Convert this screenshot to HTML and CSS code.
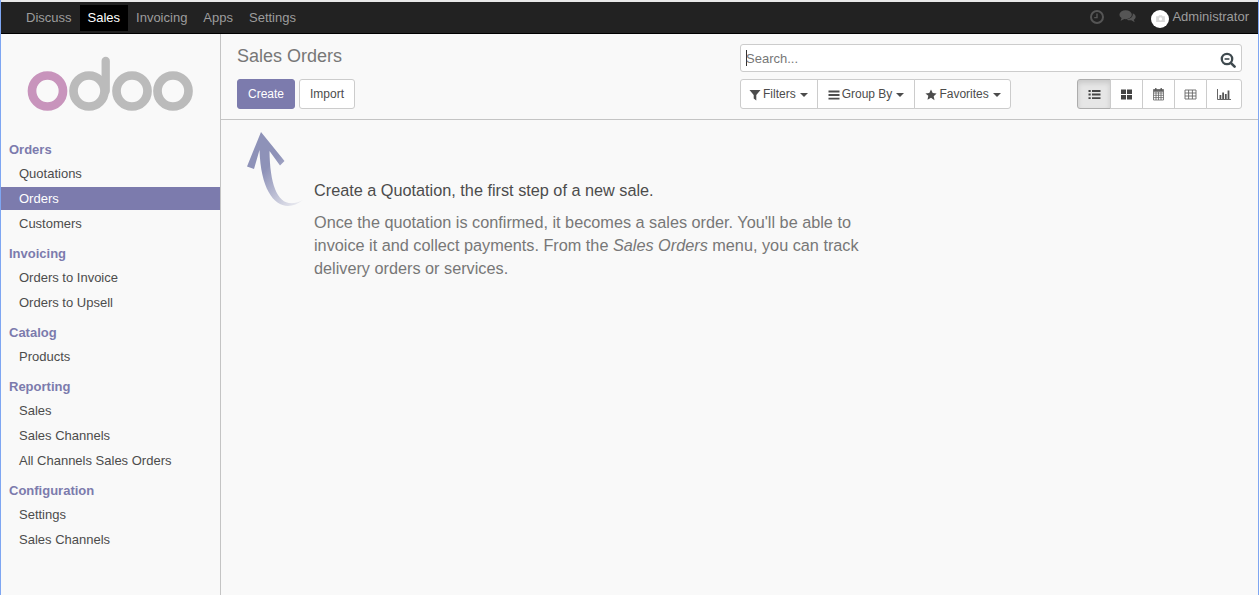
FILE: index.html
```html
<!DOCTYPE html>
<html lang="en">
<head>
<meta charset="utf-8">
<title>Sales Orders</title>
<link rel="stylesheet" href="styles.css">
</head>
<body>
<div class="frame">
  <header class="navbar">
    <nav class="apps">
      <a class="app">Discuss</a>
      <a class="app active">Sales</a>
      <a class="app">Invoicing</a>
      <a class="app">Apps</a>
      <a class="app">Settings</a>
    </nav>
    <div class="systray">
      <svg class="tray-icon clock" viewBox="0 0 16 16"><circle cx="8" cy="8" r="6" fill="none" stroke="currentColor" stroke-width="2"/><path d="M8 4.500V8.600H5.200" fill="none" stroke="currentColor" stroke-width="1.400"/></svg>
      <svg class="tray-icon chat" viewBox="0 0 18 16"><ellipse cx="7" cy="6" rx="6.600" ry="4.800" fill="currentColor"/><path d="M3 9l-1.500 3.500L7 10z" fill="currentColor"/><path d="M14.600 4.400c1.900.8 3.100 2.200 3.100 3.800 0 1.300-.8 2.400-2 3.200l1 2.800-3.600-2.200c-2 .2-4-.2-5.300-1.200 3.800 0 7.400-2.300 6.800-6.400z" fill="currentColor"/></svg>
      <span class="user">
        <span class="avatar"><svg viewBox="0 0 10 8" class="cam"><path d="M0 1.500h2.500L3.300.3h3.400l.8 1.200H10V8H0z" fill="#d9d9d9"/><circle cx="5" cy="4.500" r="1.800" fill="#fff"/></svg></span>
        <span class="user-name">Administrator</span>
      </span>
    </div>
  </header>
  <div class="main">
    <aside class="sidebar">
      <div class="logo">
        <svg viewBox="0 0 168 60" width="168" height="60">
          <circle cx="20.500" cy="34" r="15.500" fill="none" stroke="#c894bc" stroke-width="8.700"/>
          <circle cx="62" cy="34" r="15.500" fill="none" stroke="#bbbbbb" stroke-width="8.700"/>
          <path d="M78.700 34V4" fill="none" stroke="#bbbbbb" stroke-width="8.300" stroke-linecap="round"/>
          <circle cx="105" cy="34" r="15.500" fill="none" stroke="#bbbbbb" stroke-width="8.700"/>
          <circle cx="146" cy="34" r="15.500" fill="none" stroke="#bbbbbb" stroke-width="8.700"/>
        </svg>
      </div>
      <h4 class="menu-head first">Orders</h4>
      <a class="menu-item">Quotations</a>
      <a class="menu-item selected">Orders</a>
      <a class="menu-item">Customers</a>
      <h4 class="menu-head">Invoicing</h4>
      <a class="menu-item">Orders to Invoice</a>
      <a class="menu-item">Orders to Upsell</a>
      <h4 class="menu-head">Catalog</h4>
      <a class="menu-item">Products</a>
      <h4 class="menu-head">Reporting</h4>
      <a class="menu-item">Sales</a>
      <a class="menu-item">Sales Channels</a>
      <a class="menu-item">All Channels Sales Orders</a>
      <h4 class="menu-head">Configuration</h4>
      <a class="menu-item">Settings</a>
      <a class="menu-item">Sales Channels</a>
    </aside>
    <section class="content">
      <div class="control-panel">
        <div class="cp-left">
          <h1 class="title">Sales Orders</h1>
          <div class="actions">
            <button class="btn primary">Create</button>
            <button class="btn">Import</button>
          </div>
        </div>
        <div class="cp-right">
          <div class="search">
            <span class="caret-bar"></span><span class="placeholder">Search...</span>
            <svg class="search-icon" viewBox="0 0 16 16"><circle cx="7" cy="7" r="5.200" fill="none" stroke="#3f4a4f" stroke-width="2.300"/><path d="M4.600 7h4.800" stroke="#3f4a4f" stroke-width="1.600"/><path d="M10.800 10.800l3.800 3.800" stroke="#3f4a4f" stroke-width="2.600" stroke-linecap="round"/></svg>
          </div>
          <div class="tools">
            <div class="group">
              <button class="btn seg seg-filter"><svg class="ico" viewBox="0 0 12 12"><path d="M.5 1h11L7.300 6v5.500L4.700 9.500V6z" fill="#4c4c4c"/></svg>Filters<i class="caret"></i></button>
              <button class="btn seg"><svg class="ico" viewBox="0 0 12 12"><path d="M.5 1.500h11v1.900H.5zM.5 5.100h11v1.900H.5zM.5 8.700h11v1.900H.5z" fill="#4c4c4c"/></svg>Group By<i class="caret"></i></button>
              <button class="btn seg seg-fav"><svg class="ico" viewBox="0 0 12 12"><path d="M6 .5l1.700 3.600 3.900.5-2.900 2.700.8 3.900L6 8.800l-3.500 1.900.8-3.900L.4 4.600l3.900-.5z" fill="#4c4c4c"/></svg>Favorites<i class="caret"></i></button>
            </div>
            <div class="group views">
              <button class="btn view on"><svg class="vico" viewBox="0 0 13 11"><path d="M.5 1h2.200v1.900H.5zM4 1h8.500v1.900H4zM.5 4.600h2.200v1.900H.5zM4 4.600h8.500v1.900H4zM.5 8.200h2.200v1.900H.5zM4 8.200h8.500v1.900H4z" fill="#444"/></svg></button>
              <button class="btn view"><svg class="vico" viewBox="0 0 13 11"><path d="M1 .5h5v4.500H1zM7 .5h5v4.500H7zM1 6h5v4.500H1zM7 6h5v4.500H7z" fill="#444"/></svg></button>
              <button class="btn view"><svg class="vico cal" viewBox="0 0 13 14"><path d="M1.500 2.500h10v10.500h-10z M1.500 6h10M1.500 8.300h10M1.500 10.600h10M4 5v8M6.500 5v8M9 5v8" fill="none" stroke="#666" stroke-width=".8"/><path d="M1.500 2.500h10V4.800h-10z" fill="#666"/><path d="M3.800 1v2.500M9.200 1v2.500" stroke="#555" stroke-width="1.300"/></svg></button>
              <button class="btn view"><svg class="vico" viewBox="0 0 13 11"><path d="M1 1h11v9H1zM1 4h11M1 7h11M4.600 1v9M8.400 1v9" fill="none" stroke="#666" stroke-width=".9"/></svg></button>
              <button class="btn view"><svg class="vico chart" viewBox="0 0 14 11"><path d="M.5 0v10.500H14" fill="none" stroke="#555" stroke-width=".9"/><path d="M2.500 6h1.800v4H2.500zM5.200 3.500H7V10H5.200zM7.900 5h1.800v5H7.900zM10.600 1.500h1.800V10h-1.800z" fill="#555"/></svg></button>
            </div>
          </div>
        </div>
      </div>
      <div class="view-area">
        <svg class="arrow" viewBox="240 125 70 90" width="70" height="90">
          <defs>
            <linearGradient id="fade" gradientUnits="userSpaceOnUse" x1="265" y1="170" x2="303" y2="205">
              <stop offset="0" stop-color="#8e92b8"/>
              <stop offset="1" stop-color="#8e92b8" stop-opacity="0.080"/>
            </linearGradient>
          </defs>
          <path d="M261 132 L284.500 161 L280 165.500 L269.500 151 C270 190 280 212 303 200 C283 216 261 200 259.500 150 L254 169 L247 166.500 Z" fill="url(#fade)"/>
        </svg>
        <div class="help">
          <p class="help-title">Create a Quotation, the first step of a new sale.</p>
          <p class="help-body">Once the quotation is confirmed, it becomes a sales order. You'll be able to invoice it and collect payments. From the <em>Sales Orders</em> menu, you can track delivery orders or services.</p>
        </div>
      </div>
    </section>
  </div>
</div>
</body>
</html>
```
FILE: styles.css
```css
* { box-sizing: border-box; }
html, body { margin: 0; height: 100%; }
body {
  font-family: "Liberation Sans", Arial, sans-serif;
  font-size: 13px;
  line-height: 1.43;
  color: #4c4c4c;
  background: #e9e9e9;
  overflow: hidden;
}
.frame {
  height: 595px;
  padding-top: 2px;
  border-left: 1px solid #7ea6f2;
  border-right: 1px solid #7ea6f2;
  display: flex;
  flex-direction: column;
}
.navbar {
  flex: none;
  height: 32px;
  background: #222;
  border-bottom: 1px solid #000;
  display: flex;
  justify-content: space-between;
}
.apps { display: flex; padding-left: 17px; }
.app {
  padding: 0 8px;
  height: 26px;
  margin-top: 3px;
  line-height: 26px;
  font-size: 13px;
  color: #9d9d9d;
}
.app.active { color: #fff; background: #000; }
.systray { display: flex; align-items: center; padding-right: 9px; color: #9d9d9d; }
.tray-icon { color: #555; display: block; margin-top: -2px; }
.clock { width: 16px; height: 16px; margin-right: 14px; }
.chat { width: 17px; height: 15px; margin-right: 15px; }
.user { display: flex; align-items: center; }
.avatar {
  width: 18px; height: 18px; margin: 2px 3px 0 0;
  border-radius: 50%; background: #fff;
  display: flex; align-items: center; justify-content: center;
}
.cam { width: 9px; height: 7px; }
.user-name { font-size: 13px; }
.main { flex: 1; display: flex; min-height: 0; }
.sidebar {
  flex: none;
  width: 220px;
  background: #f9f9f9;
  border-right: 1px solid #c4c4c4;
}
.logo { height: 106px; padding: 23px 0 0 26px; }
.logo svg { display: block; overflow: visible; }
.menu-head {
  margin: 9px 0 1px;
  padding-left: 8px;
  height: 20px;
  line-height: 20px;
  font-size: 13px;
  font-weight: 700;
  color: #7c7bad;
}
.menu-head.first { margin-top: 0; }
.menu-item {
  display: block;
  height: 23px;
  margin-top: 2px;
  line-height: 23px;
  padding-left: 18px;
  font-size: 13px;
  color: #4c4c4c;
}
.menu-item.selected { background: #7c7bad; color: #fff; }
.content { flex: 1; min-width: 0; background: #f9f9f9; display: flex; flex-direction: column; }
.control-panel {
  flex: none;
  height: 86px;
  border-bottom: 1px solid #c4c4c4;
  display: flex;
  justify-content: space-between;
  padding: 10px 16px 0 16px;
}
.title { margin: 0; font-size: 18px; font-weight: 400; color: #777; line-height: 24px; }
.actions { display: flex; gap: 4px; margin-top: 11px; }
.btn {
  font: inherit;
  font-size: 12px;
  height: 30px;
  padding: 1px 10px 0;
  background: #fff;
  border: 1px solid #ccc;
  border-radius: 3px;
  color: #4c4c4c;
}
.btn.primary { background: #7c7bad; border-color: #7c7bad; color: #fff; width: 58px; }
.cp-right { width: 502px; }
.search {
  height: 28px;
  background: #fff;
  border: 1px solid #ccc;
  border-radius: 3px;
  display: flex;
  align-items: center;
  padding-left: 5px;
  position: relative;
}
.caret-bar { width: 1px; height: 16px; background: #333; margin-right: -1px; }
.placeholder { font-size: 13px; color: #777; margin-top: 2px; }
.search-icon { position: absolute; right: 5px; top: 7px; width: 16px; height: 16px; }
.tools { display: flex; justify-content: space-between; margin-top: 7px; }
.group { display: flex; }
.seg { border-radius: 0; margin-left: -1px; padding: 1px 10px 0; display: flex; align-items: center; }
.seg:first-child { margin-left: 0; border-radius: 3px 0 0 3px; }
.seg:last-child { border-radius: 0 3px 3px 0; }
.seg-filter { padding: 1px 9px 0 8px; }
.seg-fav { padding-right: 9px; }
.ico { width: 12px; height: 12px; margin-right: 2px; }
.caret {
  display: inline-block; width: 0; height: 0; margin-left: 4px;
  border-top: 4px solid #4c4c4c;
  border-left: 4px solid transparent;
  border-right: 4px solid transparent;
}
.view { width: 33px; padding: 0; margin-left: -1px; border-radius: 0; display: flex; align-items: center; justify-content: center; }
.view:first-child { width: 34px; margin-left: 0; border-radius: 3px 0 0 3px; }
.view:last-child { width: 36px; border-radius: 0 3px 3px 0; }
.view.on { background: #e6e6e6; border-color: #adadad; box-shadow: inset 0 3px 5px rgba(0,0,0,.125); }
.vico { width: 13px; height: 11px; }
.vico.cal { width: 13px; height: 14px; margin-top: -1px; }
.vico.chart { width: 14px; height: 11px; }
.view-area { position: relative; flex: 1; padding: 59px 0 0 93px; }
.arrow { position: absolute; left: 19px; top: 5px; overflow: visible; }
.help { width: 580px; }
.help p { margin: 0; }
.help-title { font-size: 16.25px; line-height: 23px; color: #4c4c4c; margin-bottom: 9px !important; }
.help-body { font-size: 16.25px; line-height: 23px; color: #777; }
```
